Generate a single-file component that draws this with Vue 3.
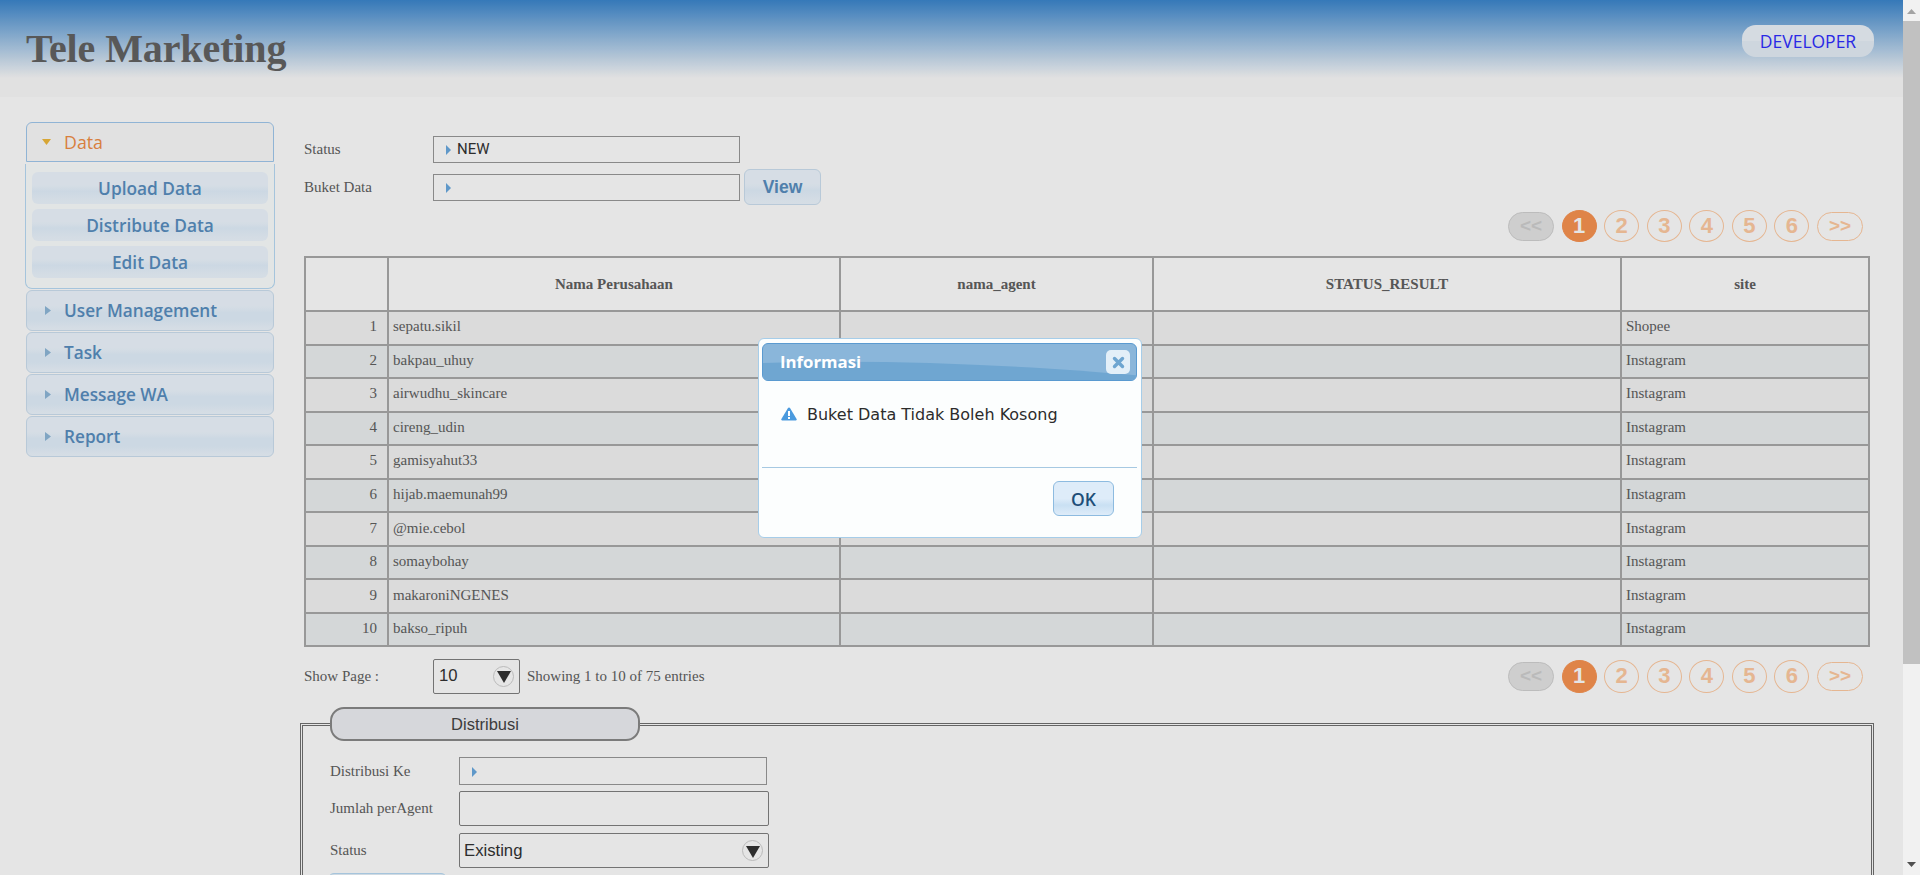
<script setup>
const menuItems = ['User Management', 'Task', 'Message WA', 'Report']
const subItems = ['Upload Data', 'Distribute Data', 'Edit Data']
const pages = ['1', '2', '3', '4', '5', '6']
const rows = [
  ['sepatu.sikil', 'Shopee'],
  ['bakpau_uhuy', 'Instagram'],
  ['airwudhu_skincare', 'Instagram'],
  ['cireng_udin', 'Instagram'],
  ['gamisyahut33', 'Instagram'],
  ['hijab.maemunah99', 'Instagram'],
  ['@mie.cebol', 'Instagram'],
  ['somaybohay', 'Instagram'],
  ['makaroniNGENES', 'Instagram'],
  ['bakso_ripuh', 'Instagram']
]
</script>

<template>
  <div class="viewport">
    <div class="page">
      <header class="topbar">
        <h1 class="brand">Tele Marketing</h1>
        <div class="user-pill">DEVELOPER</div>
      </header>

      <div class="content">
        <aside class="sidebar">
          <div class="menu-head active">
            <svg class="caret" width="9" height="6" viewBox="0 0 9 6"><path d="M0 0h9L4.500 6z" fill="#f0b93c" /></svg>
            <span>Data</span>
          </div>
          <div class="submenu">
            <div v-for="s in subItems" :key="s" class="sub-item">{{ s }}</div>
          </div>
          <div v-for="m in menuItems" :key="m" class="menu-head">
            <svg class="caret" width="6" height="9" viewBox="0 0 6 9"><path d="M0 0l6 4.500L0 9z" fill="#8fb8da" /></svg>
            <span>{{ m }}</span>
          </div>
        </aside>

        <main class="main">
          <div class="form-row first">
            <label class="label">Status</label>
            <div class="combo"><i class="tri"></i><span>NEW</span></div>
          </div>
          <div class="form-row second">
            <label class="label">Buket Data</label>
            <div class="combo"><i class="tri"></i></div>
            <button class="view-btn">View</button>
          </div>

          <div class="pager top">
            <span class="pg wide off">&lt;&lt;</span>
            <span v-for="(p, i) in pages" :key="p" class="pg" :class="{ cur: i === 0 }">{{ p }}</span>
            <span class="pg wide">&gt;&gt;</span>
          </div>

          <table class="grid">
            <colgroup>
              <col style="width:83px" /><col style="width:452px" /><col style="width:313px" /><col style="width:468px" /><col />
            </colgroup>
            <thead>
              <tr>
                <th></th><th>Nama Perusahaan</th><th>nama_agent</th><th>STATUS_RESULT</th><th>site</th>
              </tr>
            </thead>
            <tbody>
              <tr v-for="(r, i) in rows" :key="r[0]" :class="i % 2 ? 'even' : 'odd'">
                <td class="num">{{ i + 1 }}</td>
                <td>{{ r[0] }}</td>
                <td></td>
                <td></td>
                <td>{{ r[1] }}</td>
              </tr>
            </tbody>
          </table>

          <div class="foot-row">
            <label class="label">Show Page :</label>
            <div class="select small"><span>10</span><i class="dd"><svg width="14" height="12" viewBox="0 0 14 12"><path d="M0 0h14L7 12z" fill="#333" /></svg></i></div>
            <span class="entries">Showing 1 to 10 of 75 entries</span>
            <div class="pager bottom">
              <span class="pg wide off">&lt;&lt;</span>
              <span v-for="(p, i) in pages" :key="p" class="pg tall" :class="{ cur: i === 0 }">{{ p }}</span>
              <span class="pg wide">&gt;&gt;</span>
            </div>
          </div>

          <fieldset class="dist">
            <legend class="dist-legend">Distribusi</legend>
            <div class="dist-row r1">
              <label class="label dl">Distribusi Ke</label>
              <div class="combo d"><i class="tri"></i></div>
            </div>
            <div class="dist-row r2">
              <label class="label dl">Jumlah perAgent</label>
              <div class="textbox"></div>
            </div>
            <div class="dist-row r3">
              <label class="label dl">Status</label>
              <div class="select wide-sel"><span>Existing</span><i class="dd"><svg width="14" height="12" viewBox="0 0 14 12"><path d="M0 0h14L7 12z" fill="#333" /></svg></i></div>
            </div>
            <div class="dist-btn"></div>
          </fieldset>
        </main>
      </div>

      <div class="overlay"></div>

      <div class="dialog">
        <div class="dlg-title">
          <svg class="shine" viewBox="0 0 375 38" preserveAspectRatio="none"><path d="M0 20C120 16 260 22 375 33V38H0z" fill="#6fa6d1" /></svg>
          <span class="dlg-title-text">Informasi</span>
          <span class="dlg-close">
            <svg width="13" height="13" viewBox="0 0 13 13"><path d="M2.500 2.500l8 8M10.500 2.500l-8 8" stroke="#6ea5d0" stroke-width="3.400" stroke-linecap="round" /></svg>
          </span>
        </div>
        <div class="dlg-body">
          <svg width="16" height="14" viewBox="0 0 16 14"><path d="M8 .5c.5 0 .8.3 1 .6l6.600 11c.4.8 0 1.400-.8 1.400H1.200c-.8 0-1.200-.6-.8-1.400L7 1.100c.2-.3.5-.6 1-.6z" fill="#4a9ade" /><path d="M7 4h2v5H7zM7 10h2v2H7z" fill="#fff" /></svg>
          <span>Buket Data Tidak Boleh Kosong</span>
        </div>
        <div class="dlg-foot"><button class="ok">OK</button></div>
      </div>
    </div>

    <div class="scrollbar">
      <svg class="sb-arrow" width="9" height="5" viewBox="0 0 9 5"><path d="M4.500 0L9 5H0z" fill="#a3a3a3" /></svg>
      <div class="sb-thumb"></div>
      <svg class="sb-arrow down" width="9" height="5" viewBox="0 0 9 5"><path d="M0 0h9L4.500 5z" fill="#505050" /></svg>
    </div>
  </div>
</template>

<style>
html, body { margin: 0; height: 875px; overflow: hidden; background: #fff; }
</style>

<style scoped>
.viewport { display: flex; width: 1920px; height: 875px; overflow: hidden; }
.page { position: relative; flex: 1; min-width: 0; height: 875px; overflow: hidden; background: #fff; font-family: "Liberation Serif", serif; color: #606060; }

.topbar { height: 97px; box-sizing: border-box; display: flex; justify-content: space-between; align-items: flex-start; padding: 25px 29px 0 26px; background: linear-gradient(#3c87ce 0, #fbfbfb 78px, #fbfbfb 97px); }
.brand { margin: 0; font: bold 40px/48px "Liberation Serif", serif; letter-spacing: -.1px; color: #626262; }
.user-pill { width: 132px; height: 32px; border-radius: 14px; display: flex; align-items: center; justify-content: center; font: 17.500px "Open Sans", sans-serif; color: #2e2eff; background: linear-gradient(#eef4fb 0 50%, #e6eff8 50% 100%); }

.content { display: flex; padding: 25px 33px 0 25px; }
.sidebar { width: 250px; flex: none; display: flex; flex-direction: column; }
.menu-head { margin: 1px 1px 0; height: 41px; box-sizing: border-box; display: flex; align-items: center; gap: 13px; padding: 0 0 1px 18px; border: 1px solid #cde0f1; border-radius: 6px; font: 600 17.200px "Open Sans", sans-serif; color: #588ec0; background: linear-gradient(#eff7ff 0, #eff7ff 38%, #e4f1fd 55%, #e4f1fd 75%, #eff7ff 100%); }
.menu-head .caret { flex: none; }
.menu-head.active { margin: 0 1px; height: 40px; border-color: #a1c9ee; border-radius: 6px 6px 0 0; background: #fbfbfb; color: #f18e46; font-size: 17.800px; font-weight: 400; gap: 13px; padding: 0 0 0 15px; }
.submenu { margin-top: 2px; height: 125px; box-sizing: border-box; padding: 8px 6px; border: 1px solid #b8dbf5; border-top: 0; border-radius: 0 0 7px 7px; background: #fcffff; display: flex; flex-direction: column; gap: 5px; }
.sub-item { height: 32px; box-sizing: border-box; border-radius: 6px; display: flex; align-items: center; justify-content: center; font: 600 17.300px "Open Sans", sans-serif; color: #588ec0; background: linear-gradient(#eff7ff 0, #eff7ff 40%, #e4f1fd 60%, #eff7ff 100%); }

.main { flex: 1; min-width: 0; margin-left: 29px; display: flex; flex-direction: column; }
.label { font-size: 15px; color: #606060; }
.form-row { display: flex; align-items: center; height: 36px; }
.form-row.first { margin-top: 12px; height: 30px; }
.form-row.second { margin-top: 5px; }
.form-row .label { width: 129px; flex: none; }
.combo { width: 307px; height: 27px; box-sizing: border-box; border: 1px solid #999; display: flex; align-items: center; gap: 6px; padding-left: 12px; font: 15px Roboto, sans-serif; color: #333; }
.tri { width: 0; height: 0; border-left: 5px solid #6aaae0; border-top: 5px solid transparent; border-bottom: 5px solid transparent; margin-top: 2px; }
.view-btn { margin-left: 4px; width: 77px; height: 36px; border: 1px solid #cde0f1; border-radius: 6px; background: linear-gradient(#eff7ff 0, #eff7ff 40%, #e4f1fd 60%, #eff7ff 100%); color: #588ec0; font: bold 17.500px "Liberation Sans", sans-serif; padding: 0; }

.pager { display: flex; justify-content: flex-end; align-items: center; gap: 7.570px; }
.pager.top { margin: 4px 7px 13px 0; height: 34px; }
.pg { width: 35px; height: 32px; box-sizing: border-box; border: 1px solid #ffcba2; border-radius: 50%; display: flex; align-items: center; justify-content: center; color: #ffcba2; font: bold 22px "Liberation Sans", sans-serif; }
.pg.tall { height: 33px; }
.pg.wide { width: 46px; height: 29px; border-radius: 15px; font-size: 19px; }
.pg.cur { background: #f99351; border-color: #f99351; color: #fff; }
.pg.off { background: #e6e6e6; border-color: #d2d2d2; color: #d0d0d0; }

.grid { width: 1566px; table-layout: fixed; border-collapse: collapse; border: 2px solid #8c8c8c; border-right-color: #707070; border-bottom-color: #707070; font-size: 15px; }
.grid th, .grid td { border: 2px solid #aaa; padding: 0 4px; }
.grid th { height: 54px; box-sizing: border-box; color: #606060; font-size: 15px; }
.grid td { height: 33.550px; box-sizing: border-box; padding-bottom: 2px; line-height: 17px; text-align: left; color: #606060; }
.grid td.num { text-align: right; padding-right: 10px; }
.grid tr.odd td { background: #f4f4f4; }
.grid tr.even td { background: #ecf0f1; }

.foot-row { display: flex; align-items: center; height: 36px; margin-top: 11px; }
.foot-row .label { width: 129px; flex: none; }
.select { box-sizing: border-box; border: 1px solid #808080; border-radius: 2px; display: flex; align-items: center; justify-content: space-between; font: 16.700px "Liberation Sans", sans-serif; color: #333; padding: 0 5px 0 4px; }
.select.small { width: 87px; height: 35px; padding-left: 5px; }
.entries { margin-left: 7px; font-size: 15px; color: #606060; }
.dd { width: 21px; height: 21px; box-sizing: border-box; border: 1px solid #d0d0d0; border-radius: 50%; display: flex; align-items: center; justify-content: center; padding-top: 2px; }
.pager.bottom { margin-left: auto; margin-right: 7px; }

.dist { margin: 13px 0 0 -4px; width: 1574px; box-sizing: border-box; border: 3px double #707070; padding: 0 0 0 27px; }
.dist-legend { width: 310px; height: 34px; box-sizing: border-box; margin: 0 auto 0 0; padding: 0; border: 2px solid #8a8a8a; border-radius: 14px; background: #eff0f4; text-align: center; font: 16.500px/30px "Liberation Sans", sans-serif; color: #444; }
.dist-row { display: flex; align-items: center; }
.dist-row .dl { width: 129px; flex: none; }
.dist-row.r1 { height: 28px; margin-top: 16px; }
.combo.d { width: 308px; height: 28px; }
.dist-row.r2 { height: 35px; margin-top: 6px; }
.textbox { width: 310px; height: 35px; box-sizing: border-box; border: 1px solid #808080; border-radius: 2px; }
.dist-row.r3 { height: 35px; margin-top: 7px; }
.select.wide-sel { width: 310px; height: 35px; }
.dist-btn { margin: 5px 0 0 -2px; width: 117px; height: 30px; border: 1px solid #b8dbf5; border-radius: 6px; background: #e8f3fc; }

.overlay { position: absolute; inset: 0; background: rgba(0, 0, 0, .1); }

.dialog { position: absolute; left: 758px; top: 338px; width: 384px; height: 200px; box-sizing: border-box; padding: 4px 4px 4px 3px; background: #fcfefe; border: 1px solid #a6cde9; border-radius: 6px; display: flex; flex-direction: column; }
.dlg-title { position: relative; height: 38px; flex: none; box-sizing: border-box; overflow: hidden; border: 1px solid #5a9ad0; border-radius: 6px; background: #8ab6da; display: flex; align-items: center; justify-content: space-between; padding: 0 6px 2px 17px; }
.shine { position: absolute; inset: 0; width: 100%; height: 100%; }
.dlg-title-text { position: relative; color: #fff; font: bold 16.800px "Open Sans", sans-serif; }
.dlg-close { position: relative; top: 1px; width: 24px; height: 24px; border-radius: 5px; background: #e3eff8; display: flex; align-items: center; justify-content: center; }
.dlg-body { display: flex; align-items: center; gap: 10px; padding: 15px 0 0 19px; height: 36px; font: 16px "DejaVu Sans", sans-serif; color: #2c2c2c; }
.dlg-foot { margin-top: 35px; border-top: 1px solid #a6c9e2; display: flex; justify-content: flex-end; padding: 13px 23px 0 0; }
.ok { width: 61px; height: 35px; padding: 0; border: 1px solid #8dbbe0; border-radius: 6px; background: linear-gradient(#deecf9 0, #deecf9 50%, #c9e0f3 70%, #deecf9 100%); color: #1d4e78; font: 600 17.500px "Open Sans", sans-serif; }

.scrollbar { width: 17px; flex: none; height: 875px; background: #f1f1f1; display: flex; flex-direction: column; align-items: center; position: relative; }
.sb-arrow { margin-top: 9px; flex: none; }
.sb-thumb { margin-top: 7px; width: 17px; height: 643px; background: #c1c1c1; }
.sb-arrow.down { margin-top: auto; margin-bottom: 8px; }
</style>
